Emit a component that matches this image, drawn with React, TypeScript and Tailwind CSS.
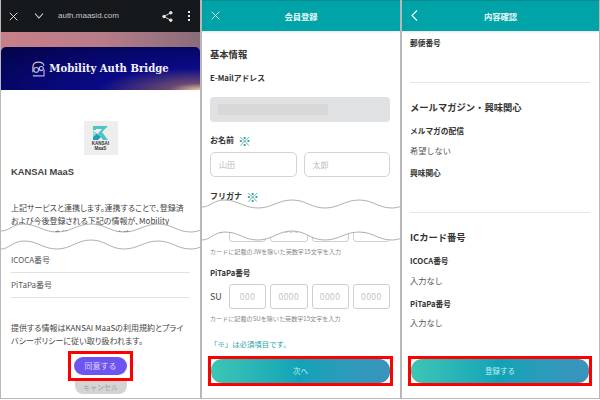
import React from "react";

const FONT = '"Noto Sans CJK JP", "Noto Sans", sans-serif';

function Wave({ t = 0, b = 0 }: { t?: number; b?: number }) {
  const top = `M0 ${231 + t} C8 ${231 + t} 12 ${224 + t} 22 ${224 + t} C36 ${224 + t} 42 ${232 + t} 56 ${232 + t} C70 ${232 + t} 76 ${224 + t} 90 ${224 + t} C104 ${224 + t} 109 ${232 + t} 123 ${232 + t} C137 ${232 + t} 143 ${224 + t} 157 ${224 + t} C171 ${224 + t} 176 ${232 + t} 190 ${232 + t} C194 ${232 + t} 197 ${231 + t} 200 ${230 + t}`;
  const bottom = `M0 ${249 + b} C8 ${249 + b} 12 ${241 + b} 23 ${241 + b} C37 ${241 + b} 42 ${249 + b} 56 ${249 + b} C70 ${249 + b} 76 ${240 + b} 90 ${240 + b} C104 ${240 + b} 109 ${249 + b} 123 ${249 + b} C137 ${249 + b} 143 ${241 + b} 157 ${241 + b} C171 ${241 + b} 176 ${249 + b} 190 ${249 + b} C194 ${249 + b} 197 ${248 + b} 200 ${247 + b}`;
  const backward = `L200 ${247 + b} C197 ${248 + b} 194 ${249 + b} 190 ${249 + b} C176 ${249 + b} 171 ${241 + b} 157 ${241 + b} C143 ${241 + b} 137 ${249 + b} 123 ${249 + b} C109 ${249 + b} 104 ${240 + b} 90 ${240 + b} C76 ${240 + b} 70 ${249 + b} 56 ${249 + b} C42 ${249 + b} 37 ${241 + b} 23 ${241 + b} C12 ${241 + b} 8 ${249 + b} 0 ${249 + b} Z`;
  return (
    <svg width="200" height="400" viewBox="0 0 200 400" className="absolute inset-0 pointer-events-none">
      <path d={`${top} ${backward}`} fill="#fff" />
      <path d={top} fill="none" stroke="#9a9a9a" strokeWidth="0.8" />
      <path d={bottom} fill="none" stroke="#9a9a9a" strokeWidth="0.8" />
    </svg>
  );
}

function XIcon({ size = 11 }: { size?: number }) {
  return (
    <svg width={size} height={size} viewBox="0 0 12 12" fill="none" stroke="#fff" strokeWidth="1.1">
      <path d="M1 1 L11 11 M11 1 L1 11" />
    </svg>
  );
}

function BridgeLogo() {
  return (
    <svg width="13" height="16" viewBox="0 0 14 17" fill="none" strokeWidth="1.3">
      <defs>
        <linearGradient id="bl" x1="0" y1="0" x2="1" y2="1">
          <stop offset="0" stopColor="#f7b7a0" />
          <stop offset="0.5" stopColor="#9fd0f5" />
          <stop offset="1" stopColor="#c48cf0" />
        </linearGradient>
      </defs>
      <path d="M1 12 V6 C1 3 3.5 1 7 1 C10 1 12.5 3 13 5 M1 16 H13 V9" stroke="url(#bl)" />
      <circle cx="4.5" cy="9.5" r="2.6" stroke="url(#bl)" />
      <circle cx="10" cy="8" r="2.2" stroke="url(#bl)" />
      <path d="M1 16 V12" stroke="url(#bl)" />
    </svg>
  );
}

function KansaiLogo() {
  return (
    <div className="w-[34px] h-[34px] bg-[#eeeeee] flex flex-col items-center pt-[5px]">
      <svg width="15" height="14" viewBox="0 0 15 14">
        <path d="M0 0 H15 L9 6 L15 14 H10 L5 7.5 L9 3 H3 V4 H0 Z" fill="#4cc6c0" />
        <path d="M0 4 L4 7.5 L0 11 Z" fill="#8fdcd6" />
        <path d="M0 14 V11 L4 7.5 L8 11 L5 14 Z" fill="#1c9fb8" />
      </svg>
      <div className="text-[4.5px] leading-[5px] font-bold text-[#333] text-center mt-[1px]" style={{ fontFamily: '"Liberation Sans", sans-serif' }}>
        KANSAI<br />MaaS
      </div>
    </div>
  );
}

function Header({ title, icon }: { title: string; icon: React.ReactNode }) {
  return (
    <div className="relative h-[31px] shrink-0 -ml-[2px] border-l-2 border-l-[#0b8488] bg-[#00a3a8] border-t border-t-[#0b8a8e] flex items-center justify-center shadow-[0_1px_2px_rgba(0,0,0,0.12)]">
      <div className="absolute left-[9px] top-[10px]">{icon}</div>
      <span className="text-[#eafafa] text-[8.3px] font-bold">{title}</span>
    </div>
  );
}

function NextButton({ label }: { label: string }) {
  return (
    <div className="ml-[6px] mr-[7px] border-[3px] border-[#ff0000] h-[30px] bg-white">
      <div className="h-full rounded-[11px] bg-gradient-to-r from-[#3cc6b4] via-[#0fa3b8] to-[#3a93bc] flex items-center justify-center text-[7.5px] text-[#c4ecec]">
        {label}
      </div>
    </div>
  );
}

function CodeRow({ prefix, first }: { prefix: string; first: string }) {
  return (
    <div className="flex items-center h-[25px] ml-[8px] mr-[10px]">
      <span className="w-[19px] text-[9px] text-[#444]">{prefix}</span>
      <div className="flex-1 grid grid-cols-4 gap-[4px]">
        {[first, "0000", "0000", "0000"].map((v, i) => (
          <div key={i} className="h-[25px] border border-[#cfcfcf] rounded-[3px] flex items-center justify-center text-[8.5px] text-[#c4c4c4] tracking-[0.5px]">
            {v}
          </div>
        ))}
      </div>
    </div>
  );
}

function Panel1() {
  return (
    <div className="relative w-[200px] h-[399px] shrink-0 border-l border-b border-[#b8b8b8] bg-white flex flex-col overflow-hidden">
      <div className="h-[232px] shrink-0 overflow-hidden">
        <div className="h-[32px] bg-[#16191c] flex items-center pl-[8px] pr-[10px]">
          <XIcon size={9} />
          <svg width="10" height="6" viewBox="0 0 10 6" fill="none" stroke="#d8d8d8" strokeWidth="1.1" className="ml-[16px]">
            <path d="M1 0.5 L5 5 L9 0.5" />
          </svg>
          <span className="ml-[14px] text-[8px] text-[#c4c4c4]" style={{ fontFamily: '"Liberation Sans", sans-serif' }}>auth.maasid.com</span>
          <svg width="11" height="11" viewBox="0 0 11 11" fill="#e8e8e8" stroke="#e8e8e8" strokeWidth="0.9" className="ml-auto">
            <path d="M8.8 1.8 L2 5.5 L8.8 9.2" fill="none" />
            <circle cx="8.8" cy="1.8" r="1.3" />
            <circle cx="2" cy="5.5" r="1.3" />
            <circle cx="8.8" cy="9.2" r="1.3" />
          </svg>
          <div className="ml-[15px] flex flex-col gap-[2px]">
            <div className="w-[2px] h-[2px] bg-[#e8e8e8]" />
            <div className="w-[2px] h-[2px] bg-[#e8e8e8]" />
            <div className="w-[2px] h-[2px] bg-[#e8e8e8]" />
          </div>
        </div>
        <div className="h-[58px] pt-[15px] bg-gradient-to-r from-[#c98088] via-[#b87c88] to-[#8a6c7a]">
          <div className="h-[43px] rounded-t-[5px] flex items-center justify-center gap-[4px] bg-[radial-gradient(ellipse_at_100%_100%,#e8c89a_0%,#6b4a70_11%,#0a0a88_36%,#05055c_80%,#04044a_100%)]">
            <BridgeLogo />
            <span className="text-[10.1px] font-bold text-[#f2f2f6]" style={{ fontFamily: '"DejaVu Serif", serif' }}>Mobility Auth Bridge</span>
          </div>
        </div>
        <div className="flex justify-center mt-[31px]">
          <KansaiLogo />
        </div>
        <div className="mt-[9px] pl-[10px] text-[9.4px] font-bold text-[#444] leading-[16px]" style={{ fontFamily: '"Liberation Sans", sans-serif' }}>KANSAI MaaS</div>
        <div className="mt-[21px] pl-[10px] text-[8px] leading-[13px] text-[#444] whitespace-nowrap [font-feature-settings:'palt']">
          上記サービスと連携します。連携することで、登録済<br />
          および今後登録される下記の情報が、Mobility<br />
          Auth Bridgeを通じて連携されます。
        </div>
      </div>
      <div className="flex-1 flex flex-col justify-end px-[10px] pb-[4px]">
        <div className="h-[26px] flex items-center text-[8px] text-[#555] border-b border-[#e2e2e2]">ICOCA番号</div>
        <div className="h-[25px] flex items-center text-[8px] text-[#555] border-b border-[#e2e2e2]">PiTaPa番号</div>
        <p className="mt-[23px] text-[8px] leading-[13px] text-[#444] whitespace-nowrap [font-feature-settings:'palt']">
          提供する情報はKANSAI MaaSの利用規約とプライ<br />バシーポリシーに従い取り扱われます。
        </p>
        <div className="mt-[4px] self-center w-[65px] h-[30px] border-[3px] border-[#ff0000] bg-white p-[3px]">
          <div className="h-full rounded-full bg-[#6e55f0] flex items-center justify-center text-[8px] text-[#ddd8fb]">同意する</div>
        </div>
        <div className="self-center w-[52px] h-[13px] rounded-b-[8px] bg-[#d4d4d4] flex items-center justify-center text-[7px] text-[#a0a0a0]">キャンセル</div>
      </div>
      <Wave />
    </div>
  );
}

function Req() {
  return <span className="text-[13px] font-normal text-[#1f9da0] ml-[4px] leading-none">※</span>;
}

function Panel2() {
  return (
    <div className="relative w-[200px] h-[399px] shrink-0 border-l-2 border-b border-[#b8b8b8] bg-white flex flex-col overflow-hidden">
      <Header title="会員登録" icon={<XIcon size={9} />} />
      <div className="h-[177px] shrink-0 overflow-hidden pl-[8px] pr-[10px]">
        <div className="mt-[15px] text-[9.3px] leading-[16px] font-bold text-[#333]">基本情報</div>
        <div className="mt-[9px] text-[7.8px] leading-[14px] font-bold text-[#333]">E-Mailアドレス</div>
        <div className="mt-[12px] h-[25px] rounded-[4px] bg-[#e0e1e2] flex items-center pl-[8px]">
          <div className="w-[110px] h-[11px] bg-[#d8d8d8]" />
        </div>
        <div className="mt-[11px] text-[8px] leading-[14px] font-bold text-[#333] flex items-center">お名前<Req /></div>
        <div className="mt-[5px] grid grid-cols-2 gap-[7px]">
          <div className="h-[25px] border border-[#d4d4d4] rounded-[5px] pl-[8px] flex items-center text-[8px] text-[#bbb]">山田</div>
          <div className="h-[25px] border border-[#d4d4d4] rounded-[5px] pl-[8px] flex items-center text-[8px] text-[#bbb]">太郎</div>
        </div>
        <div className="mt-[12px] text-[8px] leading-[14px] font-bold text-[#333] flex items-center">フリガナ<Req /></div>
        <div className="mt-[5px] h-[25px] border border-[#d4d4d4] rounded-[5px]" />
      </div>
      <div className="flex-1 flex flex-col justify-end pb-[12px]">
        <CodeRow prefix="JW" first="000" />
        <div className="mt-[5px] ml-[8px] text-[6.1px] leading-[10px] text-[#888] whitespace-nowrap">カードに記載のJWを除いた英数字15文字を入力</div>
        <div className="mt-[10px] ml-[8px] text-[7.6px] leading-[12px] font-bold text-[#333]">PiTaPa番号</div>
        <div className="mt-[5px]"><CodeRow prefix="SU" first="000" /></div>
        <div className="mt-[5px] ml-[8px] text-[6.1px] leading-[10px] text-[#888] whitespace-nowrap">カードに記載のSUを除いた英数字15文字を入力</div>
        <div className="mt-[14px] ml-[8px] text-[7.4px] leading-[12px] text-[#2aa3a8]">「※」は必須項目です。</div>
        <div className="mt-[6px]"><NextButton label="次へ" /></div>
      </div>
      <Wave t={-24} b={-9} />
    </div>
  );
}

function Label({ children, className = "" }: { children: React.ReactNode; className?: string }) {
  return <div className={`text-[7.7px] leading-[12px] font-bold text-[#333] ${className}`}>{children}</div>;
}

function Value({ children, className = "" }: { children: React.ReactNode; className?: string }) {
  return <div className={`text-[8.2px] leading-[14px] text-[#555] ${className}`}>{children}</div>;
}

function Heading({ children, className = "" }: { children: React.ReactNode; className?: string }) {
  return <div className={`text-[9.3px] leading-[16px] font-bold text-[#333] ${className}`}>{children}</div>;
}

function Panel3() {
  return (
    <div className="relative w-[200px] h-[399px] shrink-0 border-l-2 border-r border-b border-[#b8b8b8] bg-white flex flex-col overflow-hidden">
      <Header title="内容確認" icon={
        <svg width="7" height="11" viewBox="0 0 7 11" fill="none" stroke="#fff" strokeWidth="1.1" className="-mt-[1px]"><path d="M6 0.5 L1 5.5 L6 10.5" /></svg>
      } />
      <div className="flex-1 flex flex-col pl-[8px] pr-[9px]">
        <Label className="mt-[6px]">郵便番号</Label>
        <div className="mt-[33px] border-b border-[#e6e6e6]" />
        <Heading className="mt-[16px]">メールマガジン・興味関心</Heading>
        <Label className="mt-[10px]">メルマガの配信</Label>
        <Value className="mt-[6px]">希望しない</Value>
        <Label className="mt-[10px]">興味関心</Label>
        <div className="mt-[33px] border-b border-[#e6e6e6]" />
        <Heading className="mt-[16px]">ICカード番号</Heading>
        <Label className="mt-[10px]">ICOCA番号</Label>
        <Value className="mt-[6px]">入力なし</Value>
        <Label className="mt-[11px]">PiTaPa番号</Label>
        <Value className="mt-[5px]">入力なし</Value>
      </div>
      <div className="pb-[12px]"><NextButton label="登録する" /></div>
    </div>
  );
}

export default function App() {
  return (
    <div className="w-[600px] h-[400px] flex overflow-hidden bg-white" style={{ fontFamily: FONT }}>
      <Panel1 />
      <Panel2 />
      <Panel3 />
    </div>
  );
}
